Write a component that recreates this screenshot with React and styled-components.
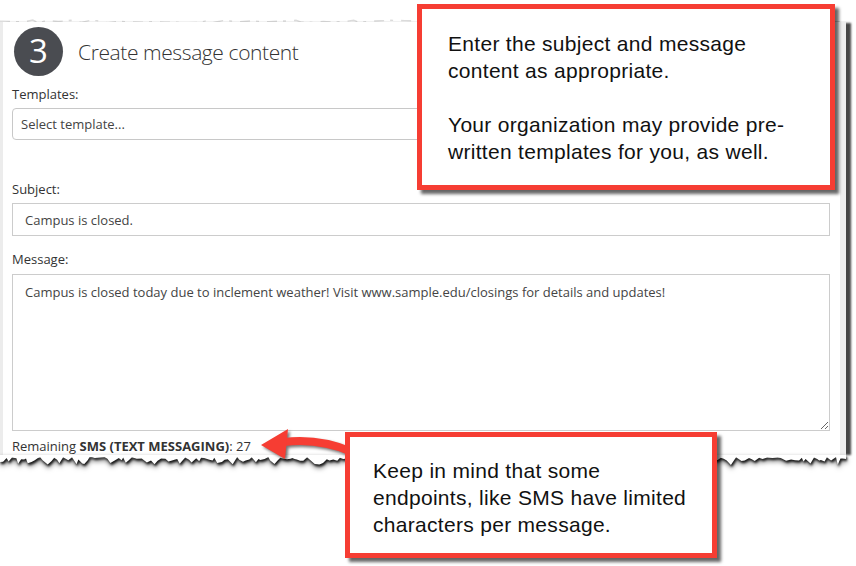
import React from "react";
import styled, { createGlobalStyle } from "styled-components";

const Global = createGlobalStyle`
  html, body { margin: 0; padding: 0; background: #fff; }
  body { font-family: "Open Sans", "Liberation Sans", sans-serif; }
  * { box-sizing: border-box; }
`;

const Stage = styled.div`
  position: relative;
  width: 856px;
  height: 566px;
  overflow: hidden;
  background: #fff;
`;

const Sheet = styled.div`
  width: 846px;
  display: flex;
  flex-direction: column;
  padding-top: 18px;
`;

const Paper = styled.div`
  background: #fff;
  border-left: 3px solid #ececec;
  border-right: 6px solid #eeeeee;
  box-shadow: 6px 0 2px -1px rgba(50, 50, 50, 0.9);
  padding: 5px 10px 1px 9px;
  display: flex;
  flex-direction: column;
`;

const Header = styled.div`
  display: flex;
  align-items: center;
  gap: 15px;
  margin-left: 2px;
  margin-bottom: 9px;
`;

const StepBadge = styled.div`
  width: 49px;
  height: 49px;
  border-radius: 50%;
  background: #4a4c51;
  color: #fff;
  display: flex;
  align-items: center;
  justify-content: center;
  font-size: 33px;
  font-weight: 400;
  line-height: 1;
  padding-bottom: 2px;
`;

const Title = styled.h2`
  margin: 0;
  font-size: 21px;
  font-weight: 300;
  color: #333;
  letter-spacing: -0.4px;
`;

const Label = styled.label`
  display: block;
  font-size: 13px;
  line-height: 18px;
  color: #333;
  margin-bottom: ${(p) => p.$gap || 5}px;
`;

const Field = styled.div`
  margin-bottom: ${(p) => p.$after}px;
`;

const Select = styled.select`
  appearance: none;
  -webkit-appearance: none;
  width: 100%;
  height: 32px;
  border: 1px solid #c8c8c8;
  border-radius: 4px;
  background: #fff;
  padding: 0 8px;
  font-family: "Open Sans", sans-serif;
  font-size: 13px;
  color: #444;
  outline: none;
`;

const TextInput = styled.input`
  display: block;
  width: 100%;
  height: 33px;
  border: 1px solid #cccccc;
  border-radius: 0;
  padding: 0 12px;
  font-family: "Open Sans", sans-serif;
  font-size: 13px;
  color: #444;
  outline: none;
`;

const TextArea = styled.textarea`
  display: block;
  width: 100%;
  height: 157px;
  border: 1px solid #cccccc;
  border-radius: 0;
  padding: 8px 12px;
  font-family: "Open Sans", sans-serif;
  font-size: 13px;
  line-height: 18px;
  color: #444;
  resize: both;
  outline: none;
`;

const Remaining = styled.div`
  margin-top: 6px;
  font-size: 13px;
  line-height: 18px;
  color: #333;
  b { font-weight: 700; }
`;

const Edge = styled.svg`
  display: block;
  overflow: visible;
`;

const Callout = styled.div`
  position: absolute;
  left: ${(p) => p.$left}px;
  top: ${(p) => p.$top}px;
  width: ${(p) => p.$width}px;
  height: ${(p) => p.$height}px;
  border: 5px solid #f63d33;
  background: #fff;
  box-shadow: 4px 4px 3px rgba(0, 0, 0, 0.6);
  padding: ${(p) => p.$pad};
  font-family: "Liberation Sans", Arial, sans-serif;
  font-size: 21px;
  letter-spacing: 0.3px;
  line-height: 27px;
  color: #111;
  z-index: 3;
  white-space: nowrap;
`;

const Para = styled.p`
  margin: 0 0 27px;
  &:last-child { margin-bottom: 0; }
`;

const Arrow = styled.svg`
  position: absolute;
  left: 250px;
  top: 420px;
  z-index: 2;
  overflow: visible;
  filter: drop-shadow(2px 2px 1.5px rgba(0, 0, 0, 0.55));
`;

function makeRand(seed) {
  let s = seed;
  return () => {
    s = (s * 9301 + 49297) % 233280;
    return s / 233280;
  };
}

function tornBottom(w, seed) {
  const r = makeRand(seed);
  const pts = [];
  let x = 0;
  while (x < w) {
    const big = r() > 0.8 ? 3 + r() * 2 : 0;
    pts.push([x, 1 + r() * 4 + big]);
    x += 1.5 + r() * 4;
  }
  pts.push([w, 3]);
  const body = pts
    .map(([px, py]) => `L${px.toFixed(1)},${py.toFixed(1)}`)
    .join(" ");
  return `M0,-1 ${body} L${w},-1 Z`;
}

function tornTop(w, seed) {
  const r = makeRand(seed);
  const pts = [];
  let x = 0;
  while (x < w) {
    pts.push(`${x.toFixed(1)},${(2 + r() * 3).toFixed(1)}`);
    x += 4 + r() * 10;
  }
  return pts.join(" ");
}

export default function App() {
  const bottom = tornBottom(846, 17);
  const top = tornTop(846, 5);
  return (
    <Stage>
      <Global />
      <Sheet>
        <Edge width="846" height="4" viewBox="0 0 846 4">
          <polyline
            points={top}
            fill="none"
            stroke="#dcdcdc"
            strokeWidth="1.4"
            strokeDasharray="10 6 3 8"
            style={{ filter: "blur(0.7px)" }}
          />
        </Edge>
        <Paper>
          <Header>
            <StepBadge>3</StepBadge>
            <Title>Create message content</Title>
          </Header>
          <Field $after={40}>
            <Label>Templates:</Label>
            <Select defaultValue="">
              <option value="">Select template...</option>
            </Select>
          </Field>
          <Field $after={14}>
            <Label>Subject:</Label>
            <TextInput readOnly value="Campus is closed." />
          </Field>
          <Field $after={0}>
            <Label $gap={6}>Message:</Label>
            <TextArea
              readOnly
              value="Campus is closed today due to inclement weather! Visit www.sample.edu/closings for details and updates!"
            />
          </Field>
          <Remaining>
            Remaining <b>SMS (TEXT MESSAGING)</b>: 27
          </Remaining>
        </Paper>
        <Edge
          width="846"
          height="12"
          viewBox="0 0 846 12"
          style={{
            filter:
              "drop-shadow(1px 2px 1px rgba(0,0,0,0.85)) drop-shadow(0px 2px 2px rgba(0,0,0,0.5))",
          }}
        >
          <path d={bottom} fill="#fff" />
        </Edge>
      </Sheet>

      <Callout $left={417} $top={4} $width={418} $height={186} $pad="21px 10px 0 26px">
        <Para>
          Enter the subject and message
          <br />
          content as appropriate.
        </Para>
        <Para>
          Your organization may provide pre-
          <br />
          written templates for you, as well.
        </Para>
      </Callout>

      <Arrow width="110" height="50" viewBox="0 0 110 50">
        <path
          d="M34 22 Q 70 18 102 32"
          fill="none"
          stroke="#f63d33"
          strokeWidth="8"
        />
        <polygon points="11,25 38,9 35,39" fill="#f63d33" />
      </Arrow>

      <Callout $left={345} $top={432} $width={372} $height={126} $pad="20px 10px 0 23px">
        <Para>
          Keep in mind that some
          <br />
          endpoints, like SMS have limited
          <br />
          characters per message.
        </Para>
      </Callout>
    </Stage>
  );
}
